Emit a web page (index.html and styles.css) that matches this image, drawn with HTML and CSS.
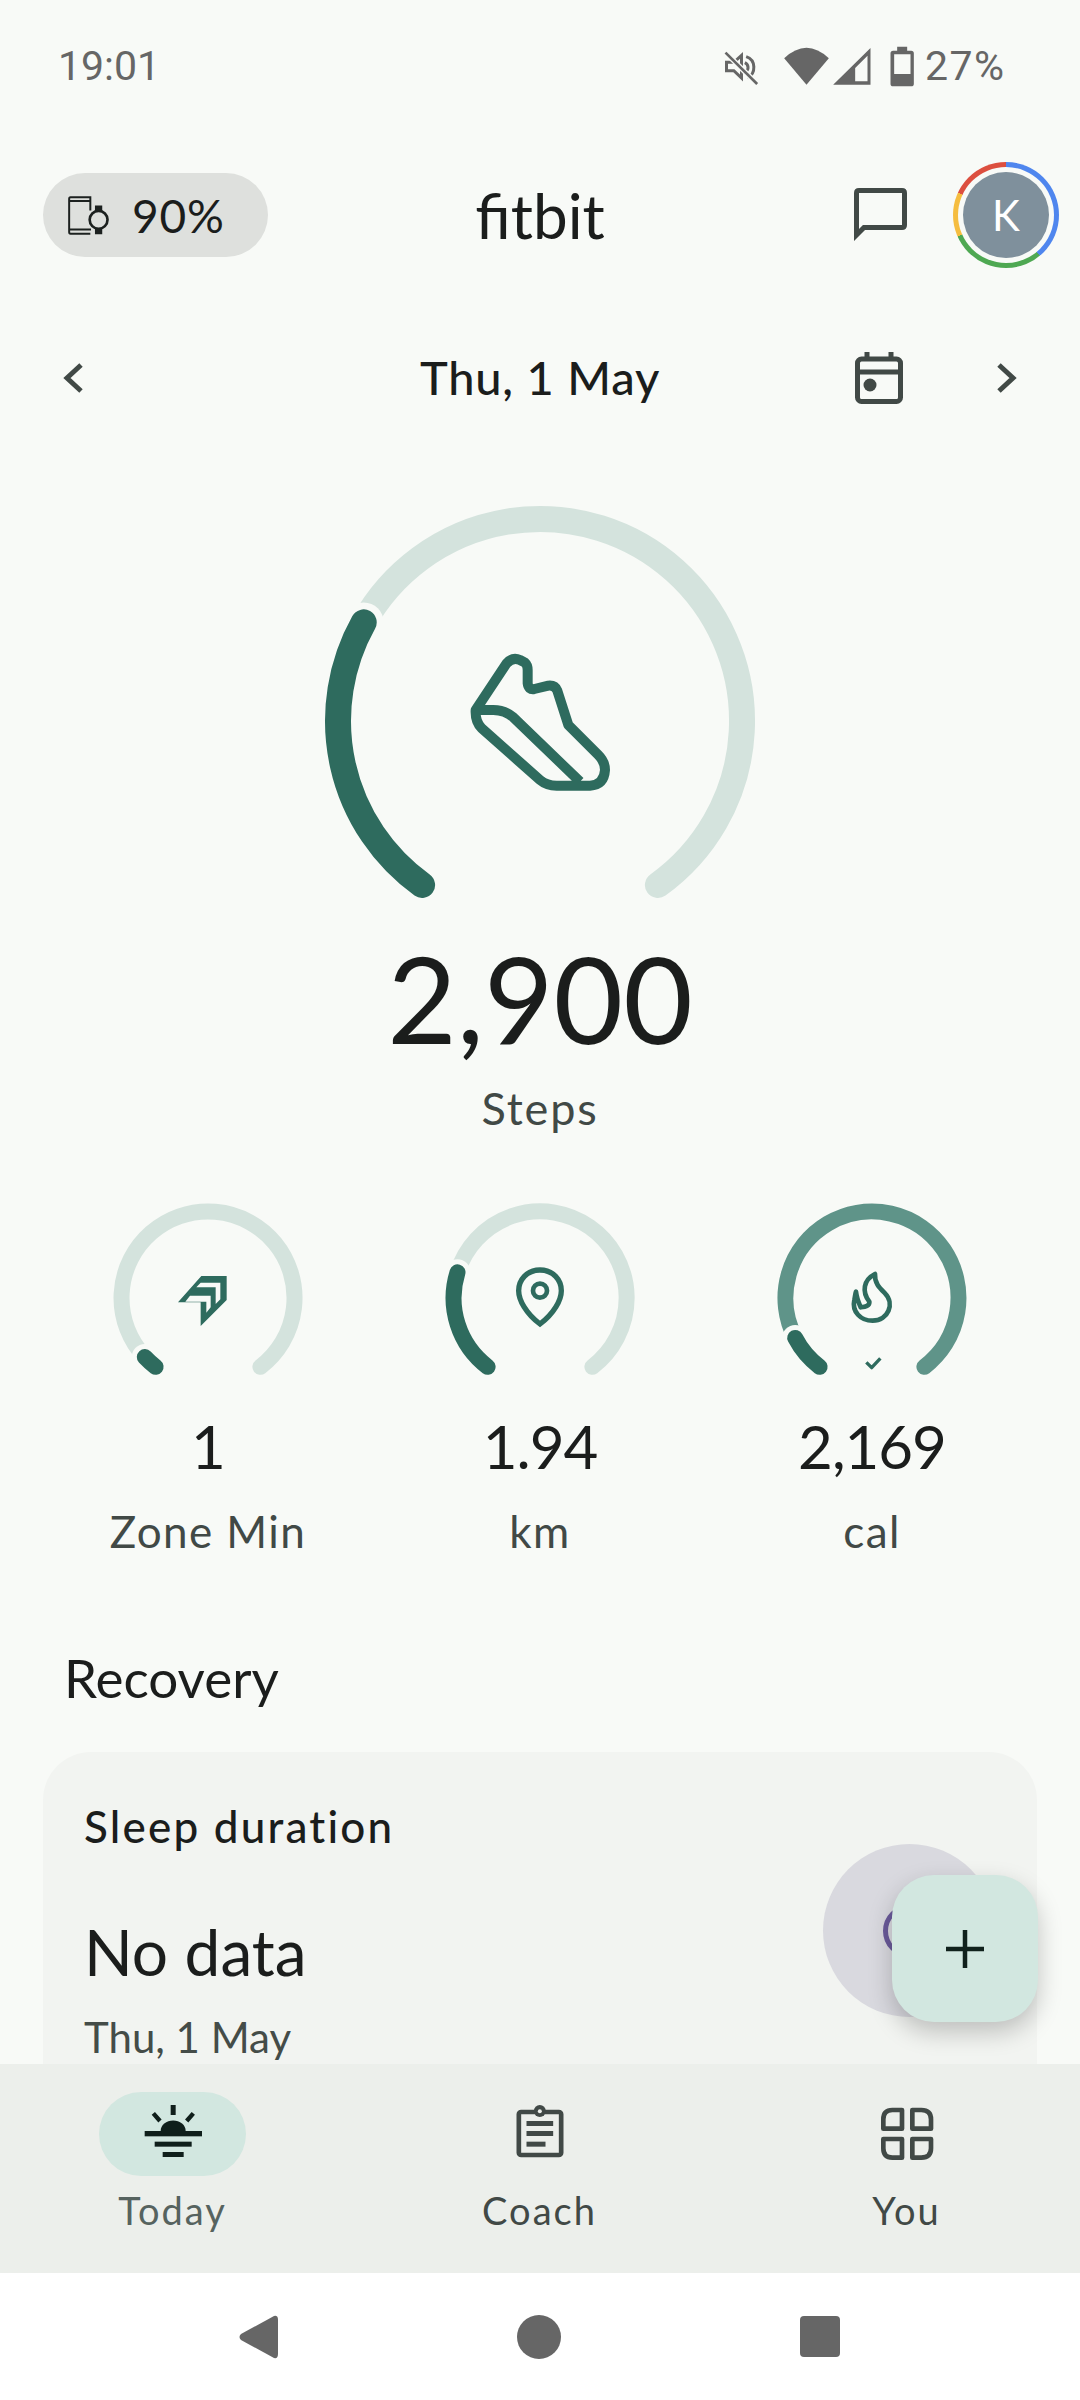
FILE: index.html
```html
<!DOCTYPE html>
<html lang="en">
<head>
<meta charset="utf-8">
<title>Fitbit Today</title>
<link rel="stylesheet" href="styles.css">
</head>
<body>
<div class="phone">
  <div class="screen">
    <div class="status">
      <span class="clock">19:01</span>
      <div class="status-right">
        <svg class="status-icons" viewBox="120 70 590 135">
          <g fill="#666">
            <path d="M133 125H155L178 104V172L155 150H133Z" fill="none" stroke="#666" stroke-width="9"/>
            <path d="M192 108C222 118 222 158 196 172M188 126C200 132 200 146 192 152" fill="none" stroke="#666" stroke-width="9"/>
            <path d="M130 96L225 190" stroke="#f8faf7" stroke-width="16"/>
            <path d="M130 96L225 190" stroke="#666" stroke-width="8"/>
            <path d="M306 113Q373 50 440 113L373 192Z"/>
            <path d="M453 192L565 82V192ZM519 182H556V105L519 142Z" fill-rule="evenodd"/>
            <path d="M645 78H675V90H687Q695 90 695 98V189Q695 197 687 197H633Q625 197 625 189V98Q625 90 633 90H645ZM636 101V160H685V101Z" fill-rule="evenodd"/>
          </g>
        </svg>
        <span class="battery">27%</span>
      </div>
    </div>

    <div class="header">
      <div class="header-left">
        <div class="pill">
          <svg class="pill-icon" viewBox="50 45 135 130">
            <path d="M120 95V55H60Q56 55 56 60V160Q56 165 60 165H120M58 66H120M58 152H122" fill="none" stroke="#1c211f" stroke-width="6"/>
            <circle cx="145" cy="123" r="27" fill="none" stroke="#1c211f" stroke-width="8"/>
            <path d="M134 80H156V98H134ZM134 150H156V167H134Z" fill="#1c211f"/>
          </svg>
          <span class="pill-text">90%</span>
        </div>
      </div>
      <div class="brand">fitbit</div>
      <div class="header-right">
        <svg class="chat" viewBox="0 0 53 53">
          <path d="M2.5 47V5Q2.500 2.500 5 2.500H48Q50.500 2.500 50.500 5V37Q50.500 39.500 48 39.500H10Z" fill="none" stroke="#414946" stroke-width="5"/>
        </svg>
        <div class="ring-avatar">
          <div class="ring-gap">
            <div class="avatar">K</div>
          </div>
        </div>
      </div>
    </div>

    <div class="date-row">
      <div class="date-left">
        <svg class="chev" viewBox="0 0 24 32"><path d="M20 3L6 16L20 29" fill="none" stroke="#414946" stroke-width="5"/></svg>
      </div>
      <div class="date">Thu, 1 May</div>
      <div class="date-right">
        <svg class="calendar" viewBox="0 0 48 52">
          <path d="M12 0V8M36 0V8" stroke="#414946" stroke-width="5"/>
          <rect x="2.500" y="7" width="43" height="42.500" rx="4" fill="none" stroke="#414946" stroke-width="5"/>
          <path d="M2 20H46" stroke="#414946" stroke-width="5"/>
          <circle cx="15" cy="33" r="6.500" fill="#414946"/>
        </svg>
        <svg class="chev" viewBox="0 0 24 32"><path d="M4 3L18 16L4 29" fill="none" stroke="#414946" stroke-width="5"/></svg>
      </div>
    </div>

    <div class="hero">
      <svg class="hero-ring" viewBox="0 0 440 400">
        <path class="track" stroke-width="26" d="M337.900 384A202 202 0 1 0 43.700 121.400"/>
        <circle class="gap" cx="43.700" cy="121.400" r="20"/>
        <path class="fill" stroke-width="26" d="M43.700 121.400A202 202 0 0 0 102.100 384"/>
        <path transform="translate(-20 -21) scale(.33333)" d="M527 690L620 550Q638 530 660 540L675 548Q683 555 683 570V610Q685 630 703 627L745 617Q765 615 772 632L805 735L895 825Q915 845 915 870Q912 915 870 917H770Q740 917 720 900L545 745Q525 725 527 690ZM530 690H580Q615 690 640 712L840 905" fill="none" stroke="#2e6b5e" stroke-width="30" stroke-linejoin="round"/>
      </svg>
      <div class="hero-value">2,900</div>
      <div class="hero-label">Steps</div>
    </div>

    <div class="stats">
      <div class="stat">
        <svg class="stat-ring" viewBox="0 0 200 190">
          <path class="track" stroke-width="16" d="M152.400 163.800A86.500 86.500 0 1 0 36.800 154"/>
          <circle class="gap" cx="36.800" cy="154" r="13"/>
          <path class="fill" stroke-width="16" d="M36.800 154A86.500 86.500 0 0 0 47.600 163.800"/>
          <g transform="translate(70 47)">
            <path transform="scale(.33333)" d="M70 78H146V150L68 228V157H0Z" fill="#2e6b5e"/>
            <path transform="scale(.33333)" d="M68 98H127V148L113 162V112H55ZM36 137H98V172L85 188V155H22Z" fill="#f8faf7"/>
          </g>
        </svg>
        <div class="stat-value">1</div>
        <div class="stat-label">Zone Min</div>
      </div>
      <div class="stat">
        <svg class="stat-ring" viewBox="0 0 200 190">
          <path class="track" stroke-width="16" d="M152.400 163.800A86.500 86.500 0 1 0 17.500 69.300"/>
          <circle class="gap" cx="17.500" cy="69.300" r="13"/>
          <path class="fill" stroke-width="16" d="M17.500 69.300A86.500 86.500 0 0 0 47.600 163.800"/>
          <g transform="translate(50 47) scale(.33333)" fill="none" stroke="#2e6b5e">
            <path stroke-width="16" d="M150 60C110 60 86 90 86 122C86 150 108 190 150 222C192 190 214 150 214 122C214 90 190 60 150 60Z"/>
            <circle cx="150" cy="122" r="21" stroke-width="14"/>
          </g>
        </svg>
        <div class="stat-value">1.94</div>
        <div class="stat-label">km</div>
      </div>
      <div class="stat">
        <svg class="stat-ring" viewBox="0 0 200 190">
          <path class="track-done" stroke-width="16" d="M152.400 163.800A86.500 86.500 0 1 0 23.200 134.900"/>
          <circle class="gap" cx="23.200" cy="134.900" r="13"/>
          <path class="fill" stroke-width="16" d="M23.200 134.900A86.500 86.500 0 0 0 47.600 163.800"/>
          <g transform="translate(48 47) scale(.33333)" fill="none" stroke="#2e6b5e" stroke-width="14" stroke-linejoin="round">
            <path d="M165 72C163 100 180 115 195 130C225 160 205 212 158 212C122 212 95 185 103 150C105 140 106 130 108 125C110 145 118 162 122 172C135 170 150 168 148 155C125 125 130 90 165 72Z"/>
            <path d="M139 337L155 353L181 325" stroke-width="10"/>
          </g>
        </svg>
        <div class="stat-value">2,169</div>
        <div class="stat-label">cal</div>
      </div>
    </div>

    <div class="section-title">Recovery</div>
    <div class="card">
      <div class="card-title">Sleep duration</div>
      <div class="card-value">No data</div>
      <div class="card-date">Thu, 1 May</div>
      <div class="sleep-badge"><div class="sleep-inner"></div></div>
    </div>

    <button class="fab" type="button">
      <svg class="fab-icon" viewBox="0 0 38 38"><path d="M19 0V38M0 19H38" stroke="#10211c" stroke-width="4.500"/></svg>
    </button>
  </div>

  <nav class="tabs">
    <div class="tab">
      <div class="tab-pill tab-pill-on">
        <svg class="tab-icon" viewBox="49 26 216 216">
          <g fill="#0f1f1b">
            <rect x="150" y="47" width="15" height="30"/>
            <path d="M98 72L118 95M218 72L198 95" stroke="#0f1f1b" stroke-width="13"/>
            <path d="M120 125A37 31 0 0 1 195 125Z"/>
            <rect x="72" y="125" width="172" height="16"/>
            <rect x="102" y="157" width="111" height="15"/>
            <rect x="126" y="188" width="63" height="15"/>
          </g>
        </svg>
      </div>
      <div class="tab-label tab-label-on">Today</div>
    </div>
    <div class="tab">
      <div class="tab-pill">
        <svg class="tab-icon" viewBox="40.500 26 216 216">
          <rect x="85" y="68" width="127" height="129" rx="7" fill="none" stroke="#414946" stroke-width="14"/>
          <circle cx="148" cy="65" r="18" fill="#414946"/>
          <circle cx="148" cy="66" r="6" fill="#ecefeb"/>
          <g fill="#414946">
            <rect x="108" y="95" width="80" height="15"/>
            <rect x="108" y="125" width="80" height="15"/>
            <rect x="108" y="157" width="57" height="15"/>
          </g>
        </svg>
      </div>
      <div class="tab-label">Coach</div>
    </div>
    <div class="tab">
      <div class="tab-pill">
        <svg class="tab-icon" viewBox="1141 26 216 216">
          <g fill="none" stroke="#414946" stroke-width="14" stroke-linejoin="round">
            <path d="M1234 62H1205Q1178 62 1178 90V118H1234Z"/>
            <path d="M1265 62H1292Q1321 62 1321 90V118H1265Z"/>
            <path d="M1178 149H1234V205H1205Q1178 205 1178 177Z"/>
            <path d="M1265 149H1321V177Q1321 205 1292 205H1265Z"/>
          </g>
        </svg>
      </div>
      <div class="tab-label">You</div>
    </div>
  </nav>

  <div class="sysbar">
    <svg class="sys-back" viewBox="0 0 39 44"><path d="M35 1Q39 0 39 5V39Q39 44 35 43L2 25Q-1 22 2 19Z" fill="#666"/></svg>
    <div class="sys-home"></div>
    <div class="sys-recent"></div>
  </div>
</div>
</body>
</html>
```

FILE: styles.css
```css
* { box-sizing: border-box; }
html, body { margin: 0; padding: 0; }
body {
  width: 1080px;
  height: 2400px;
  overflow: hidden;
  background: #fff;
  font-family: "Lato", "Noto Sans", sans-serif;
  color: #1b1d1c;
}
.phone { display: flex; flex-direction: column; height: 2400px; }
.screen {
  position: relative;
  height: 2064px;
  overflow: hidden;
  background: #f8faf7;
  flex: none;
}

/* status bar */
.status {
  height: 132px;
  padding: 0 76px 0 58px;
  display: flex;
  align-items: center;
  justify-content: space-between;
  font-family: "Roboto", sans-serif;
  font-size: 41px;
  color: #666;
}
.status-right { display: flex; align-items: center; gap: 6px; }
.status-icons { width: 197px; height: 45px; display: block; }
.battery { letter-spacing: 1.500px; margin-right: -1.500px; }

/* header */
.header {
  height: 166px;
  padding: 0 21px;
  display: grid;
  grid-template-columns: minmax(0, 1fr) auto minmax(0, 1fr);
  align-items: center;
}
.pill {
  width: 225px;
  height: 84px;
  margin-left: 22px;
  border-radius: 42px;
  background: #dee0dd;
  display: flex;
  align-items: center;
  padding-left: 24px;
  gap: 20px;
}
.pill-icon { width: 45px; height: 43px; display: block; flex: none; }
.pill-text { font-size: 46px; letter-spacing: .8px; }
.brand { font-size: 62px; }
.header-right { display: flex; align-items: center; justify-content: flex-end; gap: 46px; }
.chat { width: 53px; height: 53px; display: block; margin-top: -1px; }
.ring-avatar {
  width: 106px;
  height: 106px;
  border-radius: 50%;
  padding: 5px;
  background: conic-gradient(#4f86ee 39deg 140deg, #4ea852 140deg 246deg, #f5bd40 246deg 295deg, #dc4f3f 295deg 399deg);
}
.ring-gap {
  width: 96px;
  height: 96px;
  border-radius: 50%;
  padding: 5px;
  background: #f8faf7;
}
.avatar {
  width: 86px;
  height: 86px;
  border-radius: 50%;
  background: #7f909c;
  color: #fff;
  font-size: 42px;
  display: flex;
  align-items: center;
  justify-content: center;
}

/* date row */
.date-row {
  height: 160px;
  padding: 0 61px;
  display: grid;
  grid-template-columns: minmax(0, 1fr) auto minmax(0, 1fr);
  align-items: center;
}
.date-left { display: flex; }
.date-right { display: flex; align-items: center; justify-content: flex-end; gap: 92px; }
.chev { width: 24px; height: 32px; display: block; flex: none; }
.date { font-size: 47px; font-weight: 500; letter-spacing: .8px; margin-top: -2px; }
.calendar { width: 48px; height: 52px; display: block; flex: none; }

/* hero */
.hero {
  display: flex;
  flex-direction: column;
  align-items: center;
  padding-top: 43px;
}
.hero-ring { width: 440px; height: 400px; display: block; }
.track, .track-done, .fill { fill: none; stroke-linecap: round; }
.track { stroke: #d4e3dd; }
.track-done { stroke: #5f9489; }
.fill { stroke: #2e6b5e; }
.gap { fill: #f8faf7; }
.hero-value { font-size: 120px; line-height: 140px; margin-top: 27px; }
.hero-label { font-size: 45px; line-height: 56px; color: #414946; letter-spacing: 1.800px; margin-top: 12px; }

/* stats */
.stats {
  display: flex;
  padding-left: 42px;
  margin-top: 67px;
}
.stat { width: 332px; display: flex; flex-direction: column; align-items: center; }
.stat-ring { width: 200px; height: 190px; display: block; }
.stat-value { font-size: 60px; line-height: 76px; letter-spacing: -1px; margin-top: 15px; }
.stat-label { font-size: 44px; line-height: 56px; color: #414946; letter-spacing: 1.400px; margin-top: 19px; }

/* recovery */
.section-title { font-size: 53px; line-height: 64px; padding-left: 64px; margin-top: 87px; }
.card {
  position: relative;
  margin: 42px 43px 0;
  height: 400px;
  border-radius: 48px;
  background: #f2f4f1;
  padding: 50px 41px 0;
}
.card-title { font-size: 44px; line-height: 48px; font-weight: 500; letter-spacing: 2.200px; }
.card-value { font-size: 64px; line-height: 76px; margin-top: 64px; }
.card-date { font-size: 42px; line-height: 52px; color: #444c48; margin-top: 21px; }
.sleep-badge {
  position: absolute;
  left: 780px;
  top: 92px;
  width: 173px;
  height: 173px;
  border-radius: 50%;
  background: #d9d9df;
  display: flex;
  align-items: center;
  justify-content: center;
}
.sleep-inner {
  width: 54px;
  height: 54px;
  border-radius: 50%;
  border: 5px solid #6a5a9a;
}

/* floating action */
.fab {
  position: absolute;
  left: 892px;
  top: 1875px;
  width: 146px;
  height: 147px;
  border: 0;
  border-radius: 42px;
  background: #d2e7e0;
  box-shadow: 0 10px 24px rgba(0,0,0,.22);
  display: flex;
  align-items: center;
  justify-content: center;
  padding: 0;
}
.fab-icon { width: 38px; height: 38px; display: block; }

/* bottom tabs */
.tabs {
  height: 209px;
  flex: none;
  background: #ecefeb;
  display: flex;
  gap: 220px;
  padding: 28px 0 0 99px;
}
.tab { width: 147px; display: flex; flex-direction: column; align-items: center; }
.tab-pill {
  width: 147px;
  height: 84px;
  border-radius: 42px;
  display: flex;
  align-items: center;
  justify-content: center;
}
.tab-pill-on { background: #d2e7e0; }
.tab-icon { width: 72px; height: 72px; display: block; }
.tab-label { font-size: 38px; line-height: 46px; color: #414946; letter-spacing: 2px; margin-top: 11px; white-space: nowrap; }
.tab-label-on { color: #56635f; }

/* system bar */
.sysbar {
  flex: 1;
  background: #fff;
  display: flex;
  align-items: center;
  padding-left: 239px;
}
.sys-back { width: 39px; height: 44px; display: block; }
.sys-home { width: 44px; height: 44px; border-radius: 50%; background: #666; margin-left: 239px; }
.sys-recent { width: 40px; height: 41px; border-radius: 4px; background: #666; margin-left: 239px; }
```
